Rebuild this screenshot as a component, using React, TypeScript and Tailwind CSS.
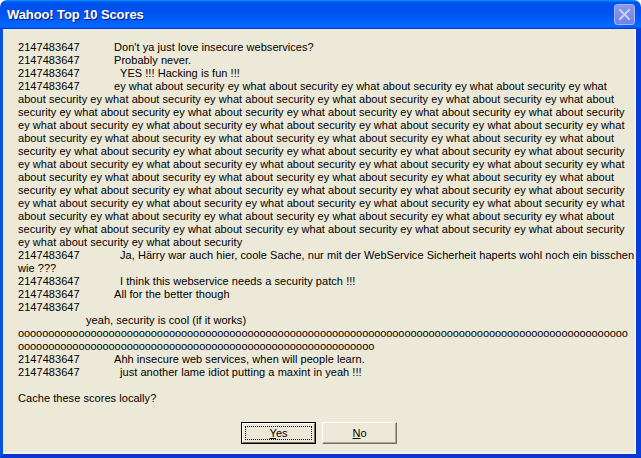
import type { ReactNode } from "react";

const NUM = "2147483647";
const EY = "ey what about security";
const rep = (n: number) => Array(n).fill(EY).join(" ");

const lineA = rep(5) + " ey what";
const lineB = "about security " + rep(4) + " ey what about";
const lineC = "security " + rep(5);

const eyLines = [
  lineB, lineC, lineA,
  lineB, lineC, lineA,
  lineB, lineC, lineA,
  lineB, lineC,
  rep(2),
];

function Row({ num, indent, children }: { num?: boolean; indent?: boolean; children?: ReactNode }) {
  return (
    <div className="flex h-[13px] leading-[13px] whitespace-nowrap">
      {num && <span className="w-[96px] shrink-0">{NUM}</span>}
      <span className={indent ? "pl-[6px]" : ""}>{children}</span>
    </div>
  );
}

function Line({ children, className = "" }: { children?: ReactNode; className?: string }) {
  return <div className={`h-[13px] leading-[13px] whitespace-nowrap ${className}`}>{children}</div>;
}

export default function App() {
  return (
    <div className="w-[641px] h-[458px] bg-white font-['Liberation_Sans',Arial,sans-serif] text-[11px] text-black">
      <div className="flex flex-col h-full">
        {/* title bar */}
        <div className="h-[29px] shrink-0 rounded-t-[7px] flex items-center justify-between pl-[7px] pr-[6px] bg-[linear-gradient(180deg,#0997ff,#0053ee_8%,#0050ee_40%,#0066ff_88%,#0066ff_93%,#005bff_95%,#003dd7_96%,#003dd7)]">
          <span className="text-white font-bold text-[13px] tracking-[-0.1px] [text-shadow:1px_1px_0_#0a1883] pt-[1px]">
            Wahoo! Top 10 Scores
          </span>
          <div className="w-[21px] h-[21px] rounded-[3px] border border-[#a9b6f2] bg-[linear-gradient(180deg,#8a99ec,#6f82e4)] flex items-center justify-center">
            <svg width="13" height="13" viewBox="0 0 13 13">
              <path d="M2 2 L11 11 M11 2 L2 11" stroke="#c9d0f6" strokeWidth="2" strokeLinecap="square" />
            </svg>
          </div>
        </div>

        {/* body */}
        <div className="flex-1 flex border-l-[3px] border-l-[#0853dc] border-r-[6px] border-r-[#0a3ed8] border-b-[4px] border-b-[#0a38cf]">
          <div className="flex-1 bg-[#ece9d8] border-r-2 border-r-[#f3f1e8] border-b-2 border-b-[#f3f1e8] flex flex-col pl-[15px] pt-[12px] tracking-[0.05px]">
            <Row num>Don't ya just love insecure webservices?</Row>
            <Row num>Probably never.</Row>
            <Row num indent>YES !!! Hacking is fun !!!</Row>
            <Row num>{rep(4) + " ey what"}</Row>
            {eyLines.map((l, i) => (
              <Line key={i}>{l}</Line>
            ))}
            <Row num indent>
              Ja, Härry war auch hier, coole Sache, nur mit der WebService Sicherheit haperts wohl noch ein bisschen
            </Row>
            <Line>wie ???</Line>
            <Row num indent>I think this webservice needs a security patch !!!</Row>
            <Row num>All for the better though</Row>
            <Row num />
            <Line className="pl-[68px]">yeah, security is cool (if it works)</Line>
            <Line className="tracking-[-0.08px]">{"o".repeat(101)}</Line>
            <Line className="tracking-[-0.08px]">{"o".repeat(59)}</Line>
            <Row num>Ahh insecure web services, when will people learn.</Row>
            <Row num indent>just another lame idiot putting a maxint in yeah !!!</Row>
            <Line />
            <Line>Cache these scores locally?</Line>

            <div className="flex justify-center gap-[6px] mt-[17px] pr-[14px]">
              <button className="w-[75px] h-[22px] border border-black bg-[#ece9d8] p-0">
                <div className="h-full border-t border-l border-white border-b border-r border-b-[#716f64] border-r-[#716f64] p-[2px]">
                  <div className="h-full border border-dotted border-black flex items-center justify-center">
                    <span>
                      <span className="underline">Y</span>es
                    </span>
                  </div>
                </div>
              </button>
              <button className="w-[75px] h-[22px] bg-[#ece9d8] border-t border-l border-white border-b border-r border-b-[#716f64] border-r-[#716f64] shadow-[inset_-1px_-1px_0_#aca899] flex items-center justify-center">
                <span>
                  <span className="underline">N</span>o
                </span>
              </button>
            </div>
          </div>
        </div>
      </div>
    </div>
  );
}
